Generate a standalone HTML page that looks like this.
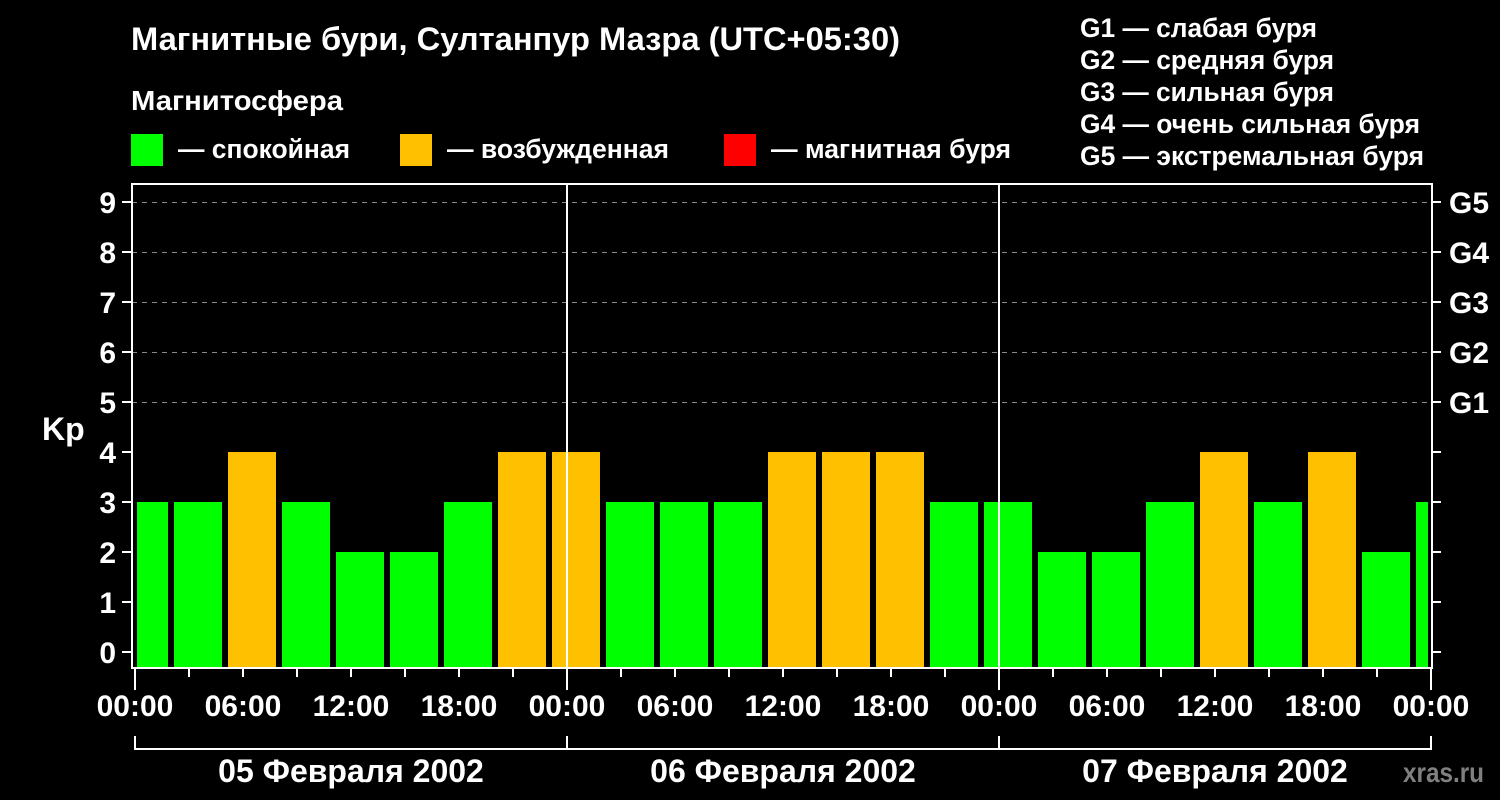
<!DOCTYPE html><html><head><meta charset="utf-8"><style>body{margin:0;background:#000}svg{display:block}text{font-family:"Liberation Sans",sans-serif;font-weight:bold;fill:#fff}</style></head><body>
<svg width="1500" height="800" viewBox="0 0 1500 800">
<rect width="1500" height="800" fill="#000"/>
<text x="131" y="50" font-size="32" textLength="769" lengthAdjust="spacingAndGlyphs">Магнитные бури, Султанпур Мазра (UTC+05:30)</text>
<text x="131" y="110" font-size="28" textLength="212" lengthAdjust="spacingAndGlyphs">Магнитосфера</text>
<rect x="131" y="134" width="32" height="32" fill="#00ff00"/><text x="178" y="158" font-size="27" textLength="172" lengthAdjust="spacingAndGlyphs">— спокойная</text>
<rect x="400" y="134" width="32" height="32" fill="#ffc000"/><text x="447" y="158" font-size="27" textLength="222" lengthAdjust="spacingAndGlyphs">— возбужденная</text>
<rect x="724" y="134" width="32" height="32" fill="#ff0000"/><text x="771" y="158" font-size="27" textLength="240" lengthAdjust="spacingAndGlyphs">— магнитная буря</text>
<g font-size="27"><text x="1080" y="37" textLength="237" lengthAdjust="spacingAndGlyphs">G1 — слабая буря</text><text x="1080" y="69" textLength="254" lengthAdjust="spacingAndGlyphs">G2 — средняя буря</text><text x="1080" y="101" textLength="254" lengthAdjust="spacingAndGlyphs">G3 — сильная буря</text><text x="1080" y="133" textLength="340" lengthAdjust="spacingAndGlyphs">G4 — очень сильная буря</text><text x="1080" y="165" textLength="344" lengthAdjust="spacingAndGlyphs">G5 — экстремальная буря</text></g>
<g stroke="#888" stroke-width="1" stroke-dasharray="5,5"><line x1="132" x2="1432" y1="202.5" y2="202.5"/><line x1="132" x2="1432" y1="252.5" y2="252.5"/><line x1="132" x2="1432" y1="302.5" y2="302.5"/><line x1="132" x2="1432" y1="352.5" y2="352.5"/><line x1="132" x2="1432" y1="402.5" y2="402.5"/></g>
<g id="bars"></g>
<g stroke="#fff" stroke-width="2" fill="none">
<rect x="132" y="184" width="1300" height="484"/>
<line x1="567" y1="184" x2="567" y2="668"/><line x1="999" y1="184" x2="999" y2="668"/>
<path d="M135 736V749H1431V736M567 736V749M999 736V749"/>
<path id="ticks" d=""/>
</g>
<g font-size="30" text-anchor="end"><text x="116" y="213">9</text><text x="116" y="263">8</text><text x="116" y="313">7</text><text x="116" y="363">6</text><text x="116" y="413">5</text><text x="116" y="463">4</text><text x="116" y="513">3</text><text x="116" y="563">2</text><text x="116" y="613">1</text><text x="116" y="663">0</text></g>
<text x="42" y="440" font-size="32">Kp</text>
<g font-size="30"><text x="1449" y="213">G5</text><text x="1449" y="263">G4</text><text x="1449" y="313">G3</text><text x="1449" y="363">G2</text><text x="1449" y="413">G1</text></g>
<g font-size="30" text-anchor="middle"><text x="135" y="716">00:00</text><text x="243" y="716">06:00</text><text x="351" y="716">12:00</text><text x="459" y="716">18:00</text><text x="567" y="716">00:00</text><text x="675" y="716">06:00</text><text x="783" y="716">12:00</text><text x="891" y="716">18:00</text><text x="999" y="716">00:00</text><text x="1107" y="716">06:00</text><text x="1215" y="716">12:00</text><text x="1323" y="716">18:00</text><text x="1431" y="716">00:00</text>
<text x="351" y="782" font-size="32">05 Февраля 2002</text><text x="783" y="782" font-size="32">06 Февраля 2002</text><text x="1215" y="782" font-size="32">07 Февраля 2002</text></g>
<text x="1403" y="782" font-size="28" textLength="81" lengthAdjust="spacingAndGlyphs" style="fill:#808080">xras.ru</text>
</svg>
<script>
var v=[3,3,4,3,2,2,3,4,4,3,3,3,4,4,4,3,3,2,2,3,4,3,4,2,3],h="";
v.forEach(function(k,n){var a=Math.max(120+54*n,137),b=Math.min(168+54*n,1428),t=652-50*k;h+='<rect x="'+a+'" y="'+t+'" width="'+(b-a)+'" height="'+(668-t)+'" fill="'+(k>=5?'#ff0000':k==4?'#ffc000':'#00ff00')+'"/>';});
document.getElementById('bars').innerHTML=h;
var d="";for(var i=0;i<10;i++){var y=652-50*i;d+="M122 "+y+"H132M1432 "+y+"H1441";}
for(var j=0;j<=24;j++){var x=135+54*j;d+="M"+x+" 668V"+(j%8==0?690:677);}
document.getElementById('ticks').setAttribute('d',d);
</script>
</body></html>
